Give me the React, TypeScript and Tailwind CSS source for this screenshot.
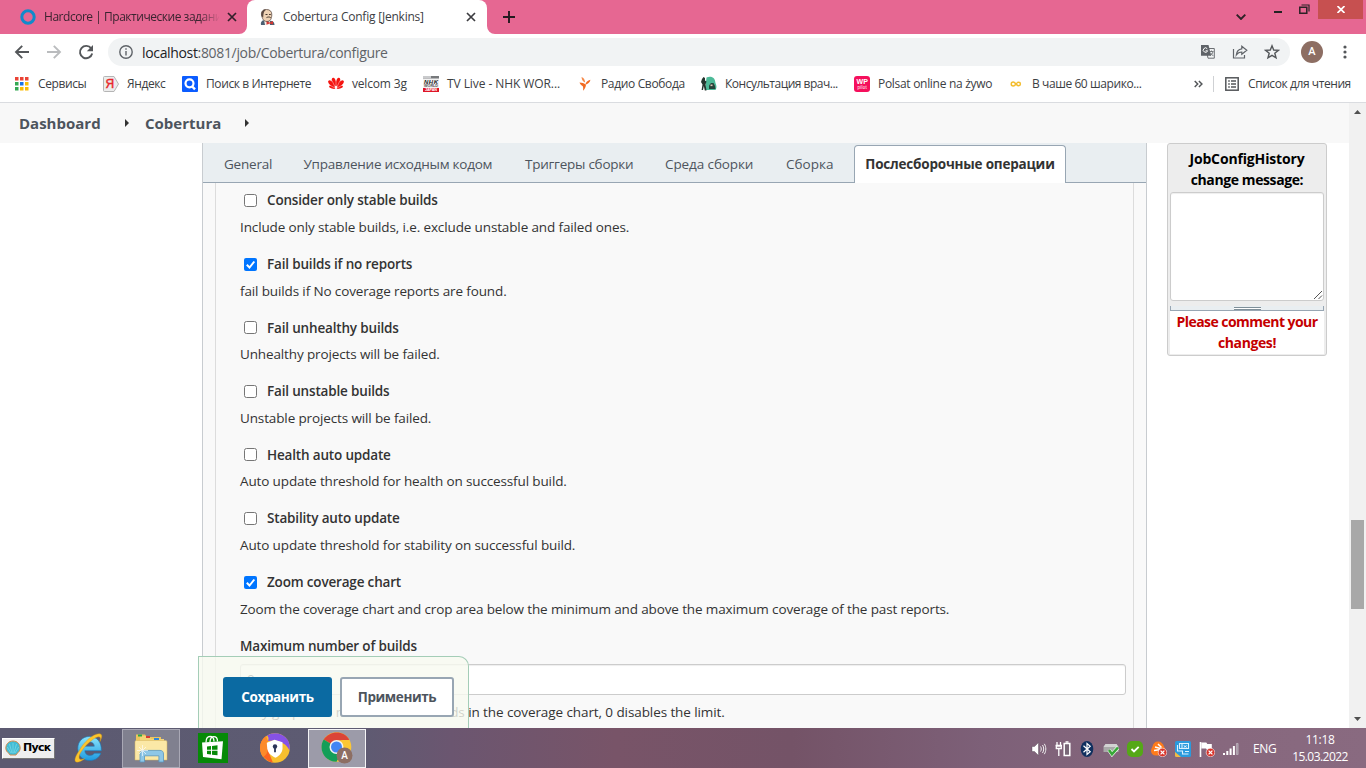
import React from "react";

type SvgProps = { className?: string };

/* ---------- Browser icons ---------- */

const Back = ({ dim = false }: { dim?: boolean }) => (
  <svg width="16" height="16" viewBox="0 0 16 16" fill="none" stroke={dim ? "#babcbe" : "#54575a"} strokeWidth="1.9" className={dim ? "rotate-180" : ""}>
    <path d="M15 8H2M8.2 1.8L2 8l6.2 6.2" />
  </svg>
);

const Reload = () => (
  <svg width="16" height="16" viewBox="0 0 16 16" fill="none">
    <path d="M13.2 4.4A6.2 6.2 0 1 0 14.2 9.6" stroke="#54575a" strokeWidth="1.9" />
    <path d="M15 1v6.2H8.8z" fill="#54575a" />
  </svg>
);

const Cross = ({ color = "#3c3c40" }: { color?: string }) => (
  <svg width="10" height="10" viewBox="0 0 10 10" stroke={color} strokeWidth="1.7">
    <path d="M1 1l8 8M9 1L1 9" />
  </svg>
);

const Jenkins = () => (
  <svg width="16" height="16" viewBox="0 0 16 16">
    <path d="M2 16c-.5-2 0-3 1.500-4.500L6 11l7 1c2 1 2.500 2.500 2.500 4z" fill="#4a6073" />
    <path d="M5 11l4 2 2-2v5H6z" fill="#f4efe8" />
    <path d="M2.500 6C2 2.500 4 .5 7.500.5S13 2.500 12.800 6s-1.300 6.500-4.800 6.500S3.300 9.500 2.500 6z" fill="#efd2b4" stroke="#4b3a33" strokeWidth=".7" />
    <path d="M2.700 7.500c-1-3 0-6.500 3-7 1.500-.2 1.500.3.300 1.300C4.500 3 4.500 5 4.200 8.500z" fill="#5c4a42" />
    <path d="M6.500 5.500h2M10 5.500h1.800M7.500 8.600c1.500-.8 3-.8 4.200 0" stroke="#33261f" strokeWidth=".9" fill="none" />
    <path d="M7.500 12.200l3 1.300 3.500-1.500v3.600l-3.500-1-3 1.200z" fill="#d33833" />
  </svg>
);

const Translate = () => (
  <svg width="16" height="16" viewBox="0 0 16 16">
    <path d="M6 4.500h8.300v9.700H8z" fill="#f1f3f4" stroke="#6c6f73" strokeWidth="1" />
    <path d="M1 1h7.500l2.700 10.700H1z" fill="#5f6368" />
    <path d="M7.300 4.800A2.200 2.200 0 1 0 7.600 6.800H5.600" fill="none" stroke="#fff" strokeWidth="1" />
    <path d="M9.500 7.500h4M11.500 6.500v1M13 7.700c-.5 2-1.700 3-3 3.800M10.500 9l2.800 3" fill="none" stroke="#6c6f73" strokeWidth=".9" />
  </svg>
);

const Share = () => (
  <svg width="16" height="16" viewBox="0 0 16 16" fill="none" stroke="#5f6368" strokeWidth="1.200">
    <path d="M1.500 5v9h11v-3" />
    <path d="M9.800 2.300l5 4-5 4V8C7.500 8 5.800 8.800 4.300 11c.3-3.400 2.300-5.800 5.500-6.200z" />
  </svg>
);

const Star = () => (
  <svg width="16" height="16" viewBox="0 0 16 16" fill="none" stroke="#54575a" strokeWidth="1.400">
    <path d="M8 1.800l1.700 4.200 4.700.3-3.600 3 1.200 4.500L8 11.300l-4 2.500 1.200-4.500-3.600-3L6.300 6z" />
  </svg>
);

/* ---------- Bookmark icons ---------- */

const Apps = () => {
  const colors = ["#ea4335", "#ea4335", "#ea4335", "#34a853", "#1a73e8", "#fbbc04", "#34a853", "#fbbc04", "#fbbc04"];
  return (
    <svg width="14" height="14" viewBox="0 0 14 14" className="ml-px">
      {colors.map((c, i) => (
        <rect key={i} x={(i % 3) * 5} y={Math.floor(i / 3) * 5} width="3.500" height="3.500" fill={c} />
      ))}
    </svg>
  );
};

const Yandex = () => (
  <svg width="16" height="16" viewBox="0 0 16 16">
    <path d="M1.500.5h9.500l4.500 7.500-4.500 7.500H1.500a1 1 0 0 1-1-1v-13a1 1 0 0 1 1-1z" fill="#ececec" stroke="#b5b5b5" />
    <text x="2.500" y="12.300" fontSize="12" fill="#e8262a" stroke="#e8262a" strokeWidth=".4" fontFamily="Liberation Sans, sans-serif">Я</text>
  </svg>
);

const SearchBlue = () => (
  <svg width="16" height="16" viewBox="0 0 16 16">
    <rect width="16" height="16" rx="1" fill="#0b5cff" />
    <circle cx="7.500" cy="7.300" r="4" fill="none" stroke="#fff" strokeWidth="2.200" />
    <path d="M10 10.200l3 3.200" stroke="#fff" strokeWidth="2.400" />
  </svg>
);

const Huawei = () => (
  <svg width="16" height="16" viewBox="0 0 16 16" fill="#f5130f">
    <ellipse cx="6" cy="6" rx="2" ry="4.300" transform="rotate(-14 6 6)" />
    <ellipse cx="10" cy="6" rx="2" ry="4.300" transform="rotate(14 10 6)" />
    <ellipse cx="3.600" cy="7.800" rx="1.900" ry="4.400" transform="rotate(-45 3.600 7.800)" />
    <ellipse cx="12.400" cy="7.800" rx="1.900" ry="4.400" transform="rotate(45 12.400 7.800)" />
    <ellipse cx="4.200" cy="11.200" rx="1.300" ry="3.300" transform="rotate(-72 4.200 11.200)" />
    <ellipse cx="11.800" cy="11.200" rx="1.300" ry="3.300" transform="rotate(72 11.800 11.200)" />
    <path d="M8 12.500V3M7.500 12L4 4.500M8.500 12L12 4.500M7 12L1.500 9M9 12l5.500-3" stroke="#fff" strokeWidth=".4" />
  </svg>
);

const Nhk = () => (
  <svg width="16" height="16" viewBox="0 0 16 16" fontFamily="Liberation Sans, sans-serif" fontWeight="700">
    <rect width="16" height="16" fill="#f2f2f2" />
    <rect width="16" height="2.500" fill="#77797c" />
    <rect width="8" height="2.500" fill="#c9cacc" />
    <rect y="12" width="16" height="4" fill="#df1526" />
    <text x="1" y="7.800" fontSize="6" fill="#222" textLength="14" fontStyle="italic">NHK</text>
    <text x="1" y="11.400" fontSize="3.800" fill="#555" textLength="14">WORLD</text>
    <text x="2" y="15.400" fontSize="3.800" fill="#fff" textLength="12">JAPAN</text>
  </svg>
);

const Svoboda = () => (
  <svg width="16" height="16" viewBox="0 0 16 16">
    <path d="M4.500 1c2.300.9 3.500 2.800 3.600 5.500C6 5.800 4.700 4 4.500 1z" fill="#f58a4b" />
    <path d="M13.500 3.800c-.8 3-2.500 4.200-5.200 4.900C9 6 10.500 4.400 13.500 3.800z" fill="#f26a21" />
    <path d="M2.500 6.500c2.500 0 4.600.7 6.500 2.300-.2 2.200-1.300 4.400-3 6 .3-1.800.3-3.300-.2-4.600C4.300 9.500 3.200 8.300 2.500 6.500z" fill="#f26a21" />
  </svg>
);

const Clinic = () => (
  <svg width="16" height="16" viewBox="0 0 16 16">
    <path d="M5.500 1.500C8 0 11.500.5 13 2.500c1.500 2 1 4 2 6 .8 2 .5 4-.5 5.500H4z" fill="#4dba98" />
    <path d="M1 3l1.500-2L4 2v2.500l1.500 1-1 3 1 6H3.800l-1-4.500-.8 4H.6l.9-5.500L0 6z" fill="#26352f" />
    <path d="M8 9.500l2-2.500h2.500l1.500 3 .5 3H8z" fill="#26443a" />
    <path d="M9.500 8.500h2v1.600h-2z" fill="#e1c8b9" />
  </svg>
);

const Pilot = () => (
  <svg width="16" height="16" viewBox="0 0 16 16" fontFamily="Liberation Sans, sans-serif" fill="#fff">
    <rect width="16" height="16" rx="3" fill="#f50f5c" />
    <text x="2.500" y="8" fontSize="7" fontWeight="700" textLength="11">WP</text>
    <text x="3.500" y="13" fontSize="4.500" textLength="9">pilot</text>
  </svg>
);

const Infinity8 = () => (
  <svg width="16" height="16" viewBox="0 0 16 16" fill="none" stroke="#f3bd2e" strokeWidth="1.500">
    <path d="M8 8C6.500 6.300 6 6 5.200 6a1.900 1.900 0 0 0 0 3.900C6.200 9.900 7 9.300 8 8s1.700-1.700 2.700-1.700a1.700 1.700 0 0 1 0 3.400C9.800 9.700 9 9.300 8 8z" />
  </svg>
);

const ReadingList = () => (
  <svg width="14" height="14" viewBox="0 0 14 14" fill="none" stroke="#54575a">
    <rect x=".8" y=".8" width="12.400" height="12.400" strokeWidth="1.500" />
    <path d="M3.200 4h1.600M3.200 7h1.600M3.200 10h1.600M6 4h5M6 7h5M6 10h5" strokeWidth="1.400" />
  </svg>
);

/* ---------- Taskbar icons ---------- */

const Shell = () => (
  <svg width="16" height="16" viewBox="0 0 16 16">
    <path d="M8 1C3.500 1 .8 4.500.8 8c0 2.400 1.200 4 3 5.200L5 15h6l1.200-1.800c1.800-1.200 3-2.800 3-5.200 0-3.500-2.700-7-7.200-7z" fill="#42bcd4" stroke="#d58a4c" strokeWidth="1" />
    <path d="M8 13.500V3M7 13L4.500 4M9 13l2.500-9M6 13L2.300 7M10 13l3.700-6" stroke="#7fdbe8" strokeWidth=".7" />
  </svg>
);

const Explorer = () => (
  <svg width="32" height="32" viewBox="0 0 32 32">
    <defs>
      <linearGradient id="ie" x1="0" y1="0" x2="0" y2="1">
        <stop offset="0" stopColor="#8be4fb" />
        <stop offset="1" stopColor="#1d9ae0" />
      </linearGradient>
    </defs>
    <path d="M16.500 4.500C9.500 4.500 4.800 9.600 4.800 16.500c0 7.200 5 12 12 12 5.300 0 9.400-2.700 11-7.300h-6.500c-1 1.500-2.400 2.200-4.300 2.200-3 0-5-1.700-5.200-4.700h16.500C28.800 10.200 24 4.500 16.500 4.500zm-4.600 9.700c.5-2.700 2.200-4.200 4.800-4.200 2.600 0 4.300 1.500 4.600 4.200z" fill="url(#ie)" stroke="#1878bb" strokeWidth=".6" />
    <path d="M6 19C.5 27 1 31 5.500 30c2-.4 4.200-1.800 6.300-3.500-2 1-4.300 1.500-5.200.4-1.200-1.500-.3-5 3-9.200C14.500 11 22.500 4.600 26 4.800c1.800.2 1.800 2.200.8 5C29.500 5 29.500 1.800 26.300 1.700 20 1.500 10.800 10 6 19z" fill="#fbc42c" stroke="#d69612" strokeWidth=".4" />
  </svg>
);

const Folders = () => (
  <svg width="34" height="30" viewBox="0 0 34 30">
    <path d="M2 4V1.500h9L13 4h14v22H2z" fill="#edc55d" />
    <path d="M6 6V3h9l2 3h13v21H6z" fill="#f4d578" />
    <path d="M4 1.500h4v2H4z" fill="#29a64b" />
    <path d="M12 3h4v2h-4z" fill="#d83b34" />
    <path d="M20 5h5v2h-5z" fill="#2f87d8" />
    <path d="M1 9c0-1 .6-1.500 1.500-1.500h29c1 0 1.500.6 1.500 1.500v18H1z" fill="#fbe8a6" stroke="#d5b45c" strokeWidth=".5" />
    <path d="M6 29v-8c0-2.500 1.200-3.600 3.500-3.600h16.500c2.200 0 3.500 1.200 3.500 3.600v8h-4.600v-6.200H10.500V29z" fill="#8fc7e6" stroke="#5996bf" strokeWidth=".8" />
    <path d="M8.500 12v11M3 17.500h11M5 14l7 7M12 14l-7 7" stroke="#fff" strokeWidth=".8" opacity=".8" />
  </svg>
);

const Store = () => (
  <svg width="30" height="30" viewBox="0 0 30 30">
    <rect width="30" height="30" fill="#068a07" />
    <path d="M4 9.500l21-1.300-1.500 18L5 24z" fill="#fff" />
    <path d="M8 9.500c0-4 1.500-6 4-6s4 2 4 5M12 9c0-3.500 1.600-5.300 3.700-5.300S19.500 5.400 19.500 8.500" fill="none" stroke="#fff" strokeWidth="1.300" />
    <path d="M9 13.500l4-.5v3.800H9zM14 12.900l5.500-.7v4.600H14zM9 17.800h4v3.700l-4-.4zM14 17.800h5.500v4.500l-5.500-.6z" fill="#068a07" />
  </svg>
);

const SecureBrowser = () => (
  <svg width="30" height="30" viewBox="0 0 30 30">
    <circle cx="15" cy="15" r="14.800" fill="#f7c02e" />
    <path d="M6 3.300C2 6 0 10.500.3 15 .7 22 6 28.500 13 29.700L9 20 6.800 9.500z" fill="#fb6420" />
    <path d="M6 3.300C-2 9-1 19 3 24c4-2 5-6 4.500-9L8 8z" fill="#fc8a2a" />
    <path d="M7 2.600C13-1.500 22-.5 27 6c2.500 3.500 3.200 8 2.500 11.500C27 12 22 8 14 7.500L8 8C9 5.500 8.500 4 7 2.600z" fill="#8652e6" />
    <path d="M14.500 6.800L22.500 9.200v6c0 4-3 7.400-7 9.500-4.500-2-7.800-5-8.300-9.500L6.800 9.700z" fill="#fff" />
    <circle cx="15" cy="13.500" r="2.200" fill="#2b3558" />
    <path d="M14.100 14h1.800v5.300h-1.800z" fill="#2b3558" />
  </svg>
);

const Chrome = () => (
  <svg width="32" height="32" viewBox="0 0 32 32">
    <circle cx="15.500" cy="15" r="14.800" fill="#fbc735" />
    <path d="M15.500 15L2.700 7.600C7.500-1 22.500-3 28.300 7.600z" fill="#db4437" />
    <path d="M15.500 15L2.700 7.600C-3 17 3 29.500 15.500 29.800L22 18.500z" fill="#149e58" />
    <path d="M15.500 8h12.800L22 18.500z" fill="#fbc735" />
    <path d="M15.500 8.400L28.300 7.600H15.500z" fill="#db4437" />
    <circle cx="15.500" cy="15" r="7" fill="#f3f3f3" />
    <circle cx="15.500" cy="15" r="5.500" fill="#4285f4" />
    <circle cx="23.500" cy="23.500" r="8" fill="#8d6e63" />
    <text x="23.500" y="27" textAnchor="middle" fontSize="10" fontFamily="Roboto, sans-serif" fontWeight="500" fill="#fff">A</text>
  </svg>
);

const Speaker = () => (
  <svg width="16" height="16" viewBox="0 0 16 16" fill="none">
    <path d="M1 5.500h2.500L7.500 1.500v13L3.500 10.500H1z" fill="#fff" stroke="#4b3f4b" strokeWidth=".4" />
    <path d="M9.500 5.500c1 1.500 1 3.500 0 5M11.500 4c1.600 2.500 1.600 5.500 0 8M13.300 2.800c2 3.200 2 7.200 0 10.400" stroke="#eee" strokeWidth="1" />
  </svg>
);

const Battery = () => (
  <svg width="16" height="16" viewBox="0 0 16 16" fill="none" stroke="#fff">
    <path d="M9.200 2.500h5.600v12H9.200z" strokeWidth="1.500" fill="#786777" />
    <path d="M10.500 1h3" strokeWidth="1.500" />
    <path d="M2 1v3M5.500 1v3M.5 4.500h6.500M1.300 5v2.500h5V5zM3.800 8v7" strokeWidth="1.300" />
  </svg>
);

const Bluetooth = () => (
  <svg width="16" height="16" viewBox="-1 0 16 16">
    <ellipse cx="7" cy="8" rx="6.300" ry="8" fill="#10305f" />
    <path d="M3.500 4.800l6.700 6L7 13.500v-11l3.200 2.700-6.700 6" fill="none" stroke="#fff" strokeWidth="1.200" />
  </svg>
);

const SafeRemove = () => (
  <svg width="16" height="16" viewBox="0 0 16 16">
    <path d="M2.500 3h11L15.500 6v5H.5V6z" fill="#a9a9a9" />
    <path d="M2.500 3h11L15.500 6H.5z" fill="#d2d2d2" />
    <path d="M6 9l3 4.200L15 6.500" fill="none" stroke="#f2fff2" strokeWidth="3.800" />
    <path d="M6 9l3 4.200L15 6.500" fill="none" stroke="#38a738" strokeWidth="2.600" />
  </svg>
);

const Health = () => (
  <svg width="16" height="16" viewBox="0 0 16 16">
    <rect width="16" height="16" rx="5" fill="#55a817" />
    <path d="M4.500 8l2.500 2.500 4.700-4.700" fill="none" stroke="#fff" strokeWidth="1.800" />
  </svg>
);

const RedBadge = () => (
  <g>
    <circle cx="11.500" cy="11.500" r="4.300" fill="#d9352c" stroke="#fff" strokeWidth=".6" />
    <path d="M9.600 9.600l3.800 3.800M13.400 9.600l-3.800 3.800" stroke="#fff" strokeWidth="1.300" />
  </g>
);

const Avast = () => (
  <svg width="16" height="16" viewBox="0 0 16 16">
    <path d="M7 .5c3 0 5 2 6 5l2 4-5 5H5c-3 0-5-2-5-4.500 0-2 1-3 1.500-4.500C2 2.500 4 .5 7 .5z" fill="#ff7b1b" />
    <path d="M3 9.500l7-1M4 6l5.500 1.500M7 3l3.500 3.500" stroke="#fff" strokeWidth="1.500" />
    <RedBadge />
  </svg>
);

const Graphics = () => (
  <svg width="16" height="16" viewBox="0 0 16 16">
    <rect width="16" height="16" rx="1.500" fill="#2a9add" />
    <path d="M4.500 2.500h9v5h-9zM2.500 4v6h5v3h6M10 10.500h4M7 3v4.500" fill="none" stroke="#d9f2ff" strokeWidth="1.100" />
    <path d="M0 11l6 5H1.500A1.500 1.500 0 0 1 0 14.500z" fill="#f4ba42" />
    <path d="M8.700 4.500l3 2M11.700 4.500l-3 2" stroke="#fff" strokeWidth=".8" />
  </svg>
);

const Flag = () => (
  <svg width="16" height="16" viewBox="0 0 16 16">
    <path d="M1.500 1v15" stroke="#fff" strokeWidth="1.600" />
    <path d="M2.300 1.500h5l1 1.500h4.500v6H8L7 7.500H2.300z" fill="#fff" />
    <RedBadge />
  </svg>
);

const Signal = () => (
  <svg width="16" height="14" viewBox="0 0 16 14" fill="#fff">
    <path d="M0 11h2v2H0zM3.300 9h2v4h-2zM6.600 6.500h2V13h-2z" />
    <path d="M9.900 4h2v9h-2z" />
    <path d="M13.400 1.500h1.700v11h-1.700z" fill="#a194a0" stroke="#d9d3d9" strokeWidth=".5" />
  </svg>
);

/* ---------- Data ---------- */

const bookmarks: { icon: React.ReactNode; label: string; style: string }[] = [
  { icon: <Apps />, label: "Сервисы", style: "w-[89px] tracking-[-0.4px]" },
  { icon: <Yandex />, label: "Яндекс", style: "w-[79px] tracking-[-0.4px]" },
  { icon: <SearchBlue />, label: "Поиск в Интернете", style: "w-[146px] tracking-[-0.4px]" },
  { icon: <Huawei />, label: "velcom 3g", style: "w-[95px] tracking-[-0.18px]" },
  { icon: <Nhk />, label: "TV Live - NHK WOR...", style: "w-[154px] tracking-[-0.08px]" },
  { icon: <Svoboda />, label: "Радио Свобода", style: "w-[124px] tracking-[-0.35px]" },
  { icon: <Clinic />, label: "Консультация врач...", style: "w-[153px] tracking-[-0.5px]" },
  { icon: <Pilot />, label: "Polsat online na żywo", style: "w-[154px] tracking-[-0.3px]" },
  { icon: <Infinity8 />, label: "В чаше 60 шарико...", style: "w-[180px] tracking-[-0.42px]" },
];

const options = [
  { title: "Consider only stable builds", help: "Include only stable builds, i.e. exclude unstable and failed ones.", on: false },
  { title: "Fail builds if no reports", help: "fail builds if No coverage reports are found.", on: true },
  { title: "Fail unhealthy builds", help: "Unhealthy projects will be failed.", on: false },
  { title: "Fail unstable builds", help: "Unstable projects will be failed.", on: false },
  { title: "Health auto update", help: "Auto update threshold for health on successful build.", on: false },
  { title: "Stability auto update", help: "Auto update threshold for stability on successful build.", on: false },
  { title: "Zoom coverage chart", help: "Zoom the coverage chart and crop area below the minimum and above the maximum coverage of the past reports.", on: true },
];

/* ---------- Sections ---------- */

const TabStrip = () => (
  <div className="flex h-[34px] bg-[#e66792] text-[12px] text-[#3c4043]">
    <div className="flex w-[239px] items-center pl-5">
      <svg width="16" height="16" viewBox="0 0 16 16" className="shrink-0">
        <circle cx="8" cy="8" r="6.200" fill="none" stroke="#118acb" strokeWidth="3" />
      </svg>
      <div className="ml-2 w-[175px] shrink-0 whitespace-nowrap tracking-[-0.47px] text-[#3a2430] [mask-image:linear-gradient(to_right,#000_155px,transparent_176px)]">
        Hardcore | Практические задани
      </div>
      <div className="ml-2 flex shrink-0"><Cross color="#33202a" /></div>
    </div>
    <svg width="8" height="8" viewBox="0 0 8 8" className="shrink-0 self-end" fill="#fff"><path d="M8 0v8H0a8 8 0 0 0 8-8z" /></svg>
    <div className="flex w-[240px] items-center rounded-t-[8px] bg-white pl-3">
      <Jenkins />
      <div className="ml-2 w-[183px] whitespace-nowrap tracking-[-0.22px]">Cobertura Config [Jenkins]</div>
      <Cross />
    </div>
    <svg width="8" height="8" viewBox="0 0 8 8" className="shrink-0 self-end" fill="#fff"><path d="M0 0v8h8a8 8 0 0 1-8-8z" /></svg>
    <svg width="12" height="12" viewBox="0 0 12 12" className="ml-2 mt-[11px]" stroke="#241a1f" strokeWidth="1.900">
      <path d="M6 0v12M0 6h12" />
    </svg>
    <svg width="10" height="6" viewBox="0 0 10 6" className="ml-auto mt-[14px]" fill="none" stroke="#2d2226" strokeWidth="1.900">
      <path d="M.7.7L5 5l4.300-4.300" />
    </svg>
    <div className="ml-[28px] mt-[11px] h-[2px] w-2 bg-[#222]" />
    <svg width="11" height="10" viewBox="0 0 11 10" className="ml-[17px] mt-1" fill="none" stroke="#2b2226">
      <path d="M2.500 1h7.500v6.500" strokeWidth="1.200" />
      <path d="M.8 3.300h7v5.900h-7z" strokeWidth="1.500" />
    </svg>
    <div className="ml-[8px] mr-[3px] flex h-[19px] w-[45px] items-center justify-center bg-[#c75050]">
      <svg width="8" height="7" viewBox="0 0 8 7" stroke="#fff" strokeWidth="1.700"><path d="M.5 0l7 7M7.500 0l-7 7" /></svg>
    </div>
  </div>
);

const Toolbar = () => (
  <div className="flex h-9 items-center bg-white pl-[14px] pr-[19px]">
    <Back />
    <div className="ml-4 flex"><Back dim /></div>
    <div className="ml-4 flex"><Reload /></div>
    <div className="ml-[14px] flex h-7 flex-1 items-center rounded-full bg-[#f1f3f4] pl-[11px] pr-[10px]">
      <svg width="14" height="14" viewBox="0 0 14 14" fill="none" stroke="#5f6368" strokeWidth="1.400">
        <circle cx="7" cy="7" r="6.200" />
        <path d="M7 6v4.500M7 3.300v1.500" />
      </svg>
      <div className="ml-[9px] flex-1 text-[14px] tracking-[-0.34px] text-[#5f6368]">
        <span className="text-[#202124]">localhost</span>:8081/job/Cobertura/configure
      </div>
      <div className="flex gap-4"><Translate /><Share /><Star /></div>
    </div>
    <div className="ml-[11px] flex h-[22px] w-[22px] items-center justify-center rounded-full bg-[#8d6e63] font-['Roboto',sans-serif] text-[11px] font-medium text-white">A</div>
    <svg width="4" height="14" viewBox="0 0 4 14" className="ml-[20px]" fill="#54575a">
      <circle cx="2" cy="2" r="1.600" /><circle cx="2" cy="7" r="1.600" /><circle cx="2" cy="12" r="1.600" />
    </svg>
  </div>
);

const Bookmarks = () => (
  <div className="flex h-[33px] items-center border-b border-[#dadce0] bg-white pb-[5px] pl-[14px] text-[12px] text-[#3c4043]">
    {bookmarks.map((b) => (
      <div key={b.label} className={`flex shrink-0 items-center whitespace-nowrap ${b.style}`}>
        <div className="mr-2 flex w-4 shrink-0">{b.icon}</div>
        {b.label}
      </div>
    ))}
    <svg width="9" height="8" viewBox="0 0 9 8" className="ml-[6px] shrink-0" fill="none" stroke="#54575a" strokeWidth="1.500">
      <path d="M.7 1l3 3-3 3M4.900 1l3 3-3 3" />
    </svg>
    <div className="ml-[10px] mr-[11px] h-4 w-px bg-[#cfd1d4]" />
    <ReadingList />
    <div className="ml-[9px] whitespace-nowrap tracking-[-0.42px]">Список для чтения</div>
  </div>
);

const Caret = ({ className }: SvgProps) => (
  <svg width="4" height="8" viewBox="0 0 4 8" className={className} fill="#333"><path d="M0 0l4 4-4 4z" /></svg>
);

const Breadcrumbs = () => (
  <div className="flex h-10 items-center bg-[#f8f8f8] pl-[19px] text-[15px] font-bold text-[#4d545d]">
    <div className="w-[106px]">Dashboard</div>
    <Caret />
    <div className="ml-4 w-[100px]">Cobertura</div>
    <Caret />
  </div>
);

const Tabs = () => (
  <div className="flex h-10 shrink-0 whitespace-nowrap border-b border-[#98a6b3] bg-[#e9eef1] pt-[2px] pl-[21px] text-[13.5px] leading-[38px] tracking-[-0.25px] text-[#4d545d]">
    <div className="w-[79.500px] tracking-[-0.2px]">General</div>
    <div className="w-[221.500px]">Управление исходным кодом</div>
    <div className="w-[140px]">Триггеры сборки</div>
    <div className="w-[121px] tracking-[-0.1px]">Среда сборки</div>
    <div className="w-[68px] tracking-[0px]">Сборка</div>
    <div className="-mb-px h-[38px] w-[212px] rounded-t-[4px] border border-b-0 border-[#98a6b3] bg-white text-center font-bold text-[#333] leading-[36px] tracking-[-0.2px]">
      Послесборочные операции
    </div>
  </div>
);

const Box = ({ on }: { on: boolean }) =>
  on ? (
    <svg width="13" height="13" viewBox="0 0 13 13">
      <rect width="13" height="13" rx="2" fill="#0075ff" />
      <path d="M2.800 6.800l2.700 2.700 4.800-6" fill="none" stroke="#fff" strokeWidth="2" />
    </svg>
  ) : (
    <div className="h-[13px] w-[13px] rounded-[2.500px] border border-[#767676] bg-white" />
  );

const Config = () => (
  <div className="flex w-[945px] shrink-0 flex-col border-x border-[#c8ccd0] bg-[#f9f9f9]">
    <Tabs />
    <div className="ml-3 mr-3 flex-1 border-x border-[#dcdcdc] pl-6 pt-[4px] text-[13.5px] tracking-[-0.13px] text-[#333]">
      {options.map((o) => (
        <div key={o.title} className="h-[63.600px] whitespace-nowrap">
          <div className="flex h-[27px] items-center pl-1 font-semibold tracking-[-0.17px]">
            <Box on={o.on} />
            <div className="ml-[10px]">{o.title}</div>
          </div>
          <div className="leading-[26px]">{o.help}</div>
        </div>
      ))}
      <div className="h-[32px] pt-px font-semibold leading-[27px] tracking-[-0.17px]">Maximum number of builds</div>
      <div className="h-[31px] w-[886px] rounded-[3px] border border-[#ccc] bg-white px-[6px] leading-[29px] shadow-[inset_0_1px_1px_rgba(0,0,0,0.07)]">0</div>
      <div className="pt-[5px] leading-[25px] tracking-[-0.09px]">Only graph the most recent N builds in the coverage chart, 0 disables the limit.</div>
    </div>
  </div>
);

const HistoryBox = () => (
  <div className="ml-5 h-[213px] w-[160px] rounded-[3px] border border-[#ccc] bg-[#ededed] px-[2px] pb-[2px] text-center text-[14px] font-bold leading-[21px] tracking-[-0.4px]">
    <div className="pt-[4px] pb-[2px] text-black"><span className="tracking-[-0.15px]">JobConfigHistory</span><br />change message:</div>
    <div className="flex h-[109px] items-end justify-end rounded-[3px] border border-[#ccc] bg-white shadow-[inset_0_1px_1px_rgba(0,0,0,0.07)]">
      <svg width="10" height="10" viewBox="0 0 10 10" stroke="#555" strokeWidth="1"><path d="M1 9l8-8M5.500 9L9 5.500" /></svg>
    </div>
    <div className="mt-[5px] flex h-[5px] justify-center border border-t-0 border-[#98a6b3] bg-[#e9eef1]">
      <div className="mt-[1px] h-[3px] w-[27px] border-y border-[#7f8f99] bg-white" />
    </div>
    <div className="h-[43px] bg-white text-[#c40000]"><span className="tracking-[-0.54px]">Please comment your</span><br />changes!</div>
  </div>
);

const SaveBar = () => (
  <div className="absolute bottom-0 left-[198px] flex h-[72px] w-[271px] gap-2 rounded-tr-[10px] border border-b-0 border-[#a4cdb7] bg-[#f7faf0]/80 pl-6 pt-5 text-[13.5px] font-bold tracking-[-0.4px]">
    <div className="flex h-10 w-[109px] items-center justify-center rounded-[3px] bg-[#0b6aa2] pt-px text-white">Сохранить</div>
    <div className="flex h-10 w-[114px] items-center justify-center rounded-[3px] border-2 border-[#98a6b3] bg-white pt-px text-[#4d545d]">Применить</div>
  </div>
);

const Scrollbar = () => (
  <div className="flex w-[17px] flex-col items-center bg-[#f1f1f1]">
    <svg width="7" height="4" viewBox="0 0 7 4" className="mt-[7px]" fill="#505050"><path d="M0 4L3.500 0 7 4z" /></svg>
    <div className="mt-[406px] h-[89px] w-[13px] bg-[#a8a8a8]" />
    <svg width="7" height="4" viewBox="0 0 7 4" className="mt-auto mb-[7px]" fill="#505050"><path d="M0 0h7L3.500 4z" /></svg>
  </div>
);

const Taskbar = () => (
  <div className="flex h-10 items-center bg-[linear-gradient(to_right,#5c5a71_0%,#5d5b72_26%,#6b5670_33%,#785468_45%,#745367_58%,#7d6078_72%,#86677d_85%,#896a80_100%)] text-white">
    <div className="ml-[2px] flex h-[21px] w-[53px] items-center border border-t-white border-l-white border-r-[#777] border-b-[#777] bg-[#efefef] pl-[2px] font-['DejaVu_Sans',sans-serif] text-[11px] font-bold tracking-[-0.7px] text-black">
      <Shell /><span className="ml-[2px]">Пуск</span>
    </div>
    <div className="ml-[18px] flex"><Explorer /></div>
    <div className="ml-[17px] flex h-[39px] w-[58px] items-center justify-center border border-[#a9a8b5] bg-[#80808f]"><Folders /></div>
    <div className="ml-[18px] flex"><Store /></div>
    <div className="ml-[32px] flex"><SecureBrowser /></div>
    <div className="ml-[18px] flex h-[39px] w-[58px] items-center justify-center border border-[#f4f4f6] bg-[#9c9ba9]"><Chrome /></div>
    <div className="ml-auto flex items-center gap-2 pt-px">
      <Speaker /><Battery /><Bluetooth /><SafeRemove /><Health /><Avast /><Graphics /><Flag /><Signal />
    </div>
    <div className="ml-[14px] w-6 pt-px text-[12px] tracking-[-0.3px]">ENG</div>
    <div className="ml-[15px] mr-[18px] w-[56px] whitespace-nowrap text-center text-[12px] leading-[17px] tracking-[-0.55px]"><span className="tracking-[-0.35px]">11:18</span><br />15.03.2022</div>
  </div>
);

export default function App() {
  return (
    <div className="flex h-[768px] w-[1366px] flex-col overflow-hidden bg-white font-['Open_Sans','Noto_Sans',sans-serif]">
      <TabStrip />
      <Toolbar />
      <Bookmarks />
      <div className="flex min-h-0 flex-1">
        <div className="relative flex min-w-0 flex-1 flex-col">
          <Breadcrumbs />
          <div className="flex min-h-0 flex-1 pl-[202px]">
            <Config />
            <HistoryBox />
          </div>
          <SaveBar />
        </div>
        <Scrollbar />
      </div>
      <Taskbar />
    </div>
  );
}
